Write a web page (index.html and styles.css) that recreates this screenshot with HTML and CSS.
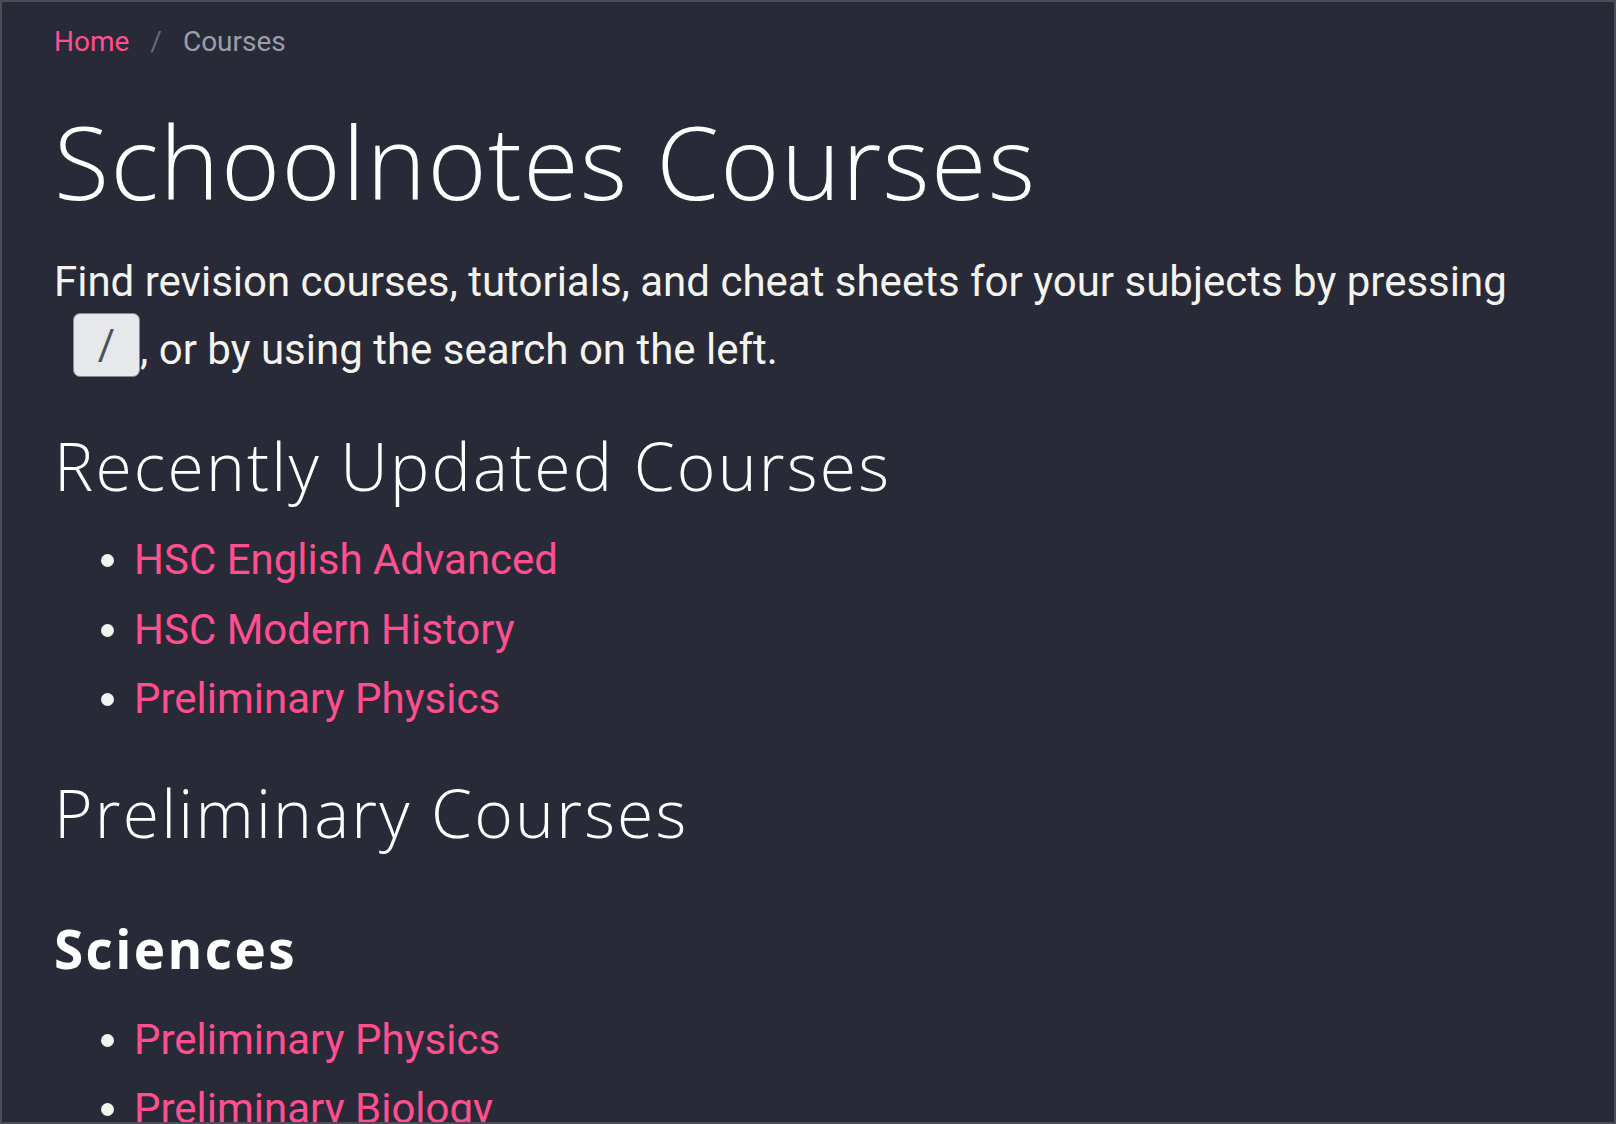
FILE: index.html
```html
<!DOCTYPE html>
<html lang="en">
<head>
<meta charset="utf-8">
<title>Schoolnotes Courses</title>
<link rel="stylesheet" href="styles.css">
</head>
<body>
<div class="frame">
  <main class="content">
    <nav class="breadcrumb">
      <a class="crumb-link" href="#">Home</a>
      <span class="crumb-sep">/</span>
      <span class="crumb-current">Courses</span>
    </nav>
    <h1 class="title">Schoolnotes Courses</h1>
    <p class="intro">Find revision courses, tutorials, and cheat sheets for your subjects by pressing <kbd class="key">/</kbd>, or by using the search on the left.</p>
    <h2 class="section">Recently Updated Courses</h2>
    <ul class="course-list first-list">
      <li><a href="#">HSC English Advanced</a></li>
      <li><a href="#">HSC Modern History</a></li>
      <li><a href="#">Preliminary Physics</a></li>
    </ul>
    <h2 class="section section-prelim">Preliminary Courses</h2>
    <h3 class="subsection">Sciences</h3>
    <ul class="course-list second-list">
      <li><a href="#">Preliminary Physics</a></li>
      <li><a href="#">Preliminary Biology</a></li>
      <li><a href="#">Preliminary Chemistry</a></li>
    </ul>
  </main>
</div>
</body>
</html>
```
FILE: styles.css
```css
html, body {
  margin: 0;
  padding: 0;
  height: 100%;
  overflow: hidden;
  background: #292a37;
}

.frame {
  box-sizing: border-box;
  height: 100vh;
  border: 2px solid #4b4c55;
  overflow: hidden;
  background: #292a37;
}

.content {
  padding: 19px 52px 0 52px;
  font-family: Roboto, "Liberation Sans", sans-serif;
  color: #f4f4ee;
}

.breadcrumb {
  display: flex;
  align-items: baseline;
  font-size: 28px;
  line-height: 42px;
  height: 42px;
}

.crumb-link {
  color: #ff4f8f;
  text-decoration: none;
}

.crumb-sep {
  color: #666b75;
  margin: 0 21px 0 21px;
}

.crumb-current {
  color: #9c9da8;
}

.title {
  margin: 38px 0 0 0;
  font-family: "Open Sans", sans-serif;
  font-weight: 300;
  font-size: 101px;
  line-height: 121px;
  letter-spacing: 1.4px;
  color: #ffffff;
}

.intro {
  margin: 26px 0 0 0;
  font-size: 42px;
  line-height: 68px;
  color: #f4f4ee;
}

.key {
  display: inline-block;
  box-sizing: border-box;
  width: 67px;
  height: 64px;
  margin: -3px 0 0 19px;
  vertical-align: top;
  background: #e7e8eb;
  border: 1px solid #868a92;
  border-radius: 7px;
  font-family: Roboto, "Liberation Sans", sans-serif;
  font-size: 42px;
  line-height: 62px;
  text-align: center;
  color: #4e5158;
}

.section {
  margin: 42px 0 0 0;
  font-family: "Open Sans", sans-serif;
  font-weight: 300;
  font-size: 66px;
  line-height: 79px;
  letter-spacing: 2.2px;
  color: #ffffff;
}

.section-prelim {
  margin-top: 39px;
}

.subsection {
  margin: 65px 0 0 0;
  font-family: "Open Sans", sans-serif;
  font-weight: 700;
  font-size: 53px;
  line-height: 64px;
  letter-spacing: 2.4px;
  color: #ffffff;
}

.course-list {
  margin: 20px 0 0 0;
  padding-left: 80px;
  font-size: 42px;
  line-height: 69.5px;
  color: #f4f4ee;
}

.second-list {
  margin-top: 24px;
}

.course-list a {
  color: #ff4f8f;
  text-decoration: none;
}
```
